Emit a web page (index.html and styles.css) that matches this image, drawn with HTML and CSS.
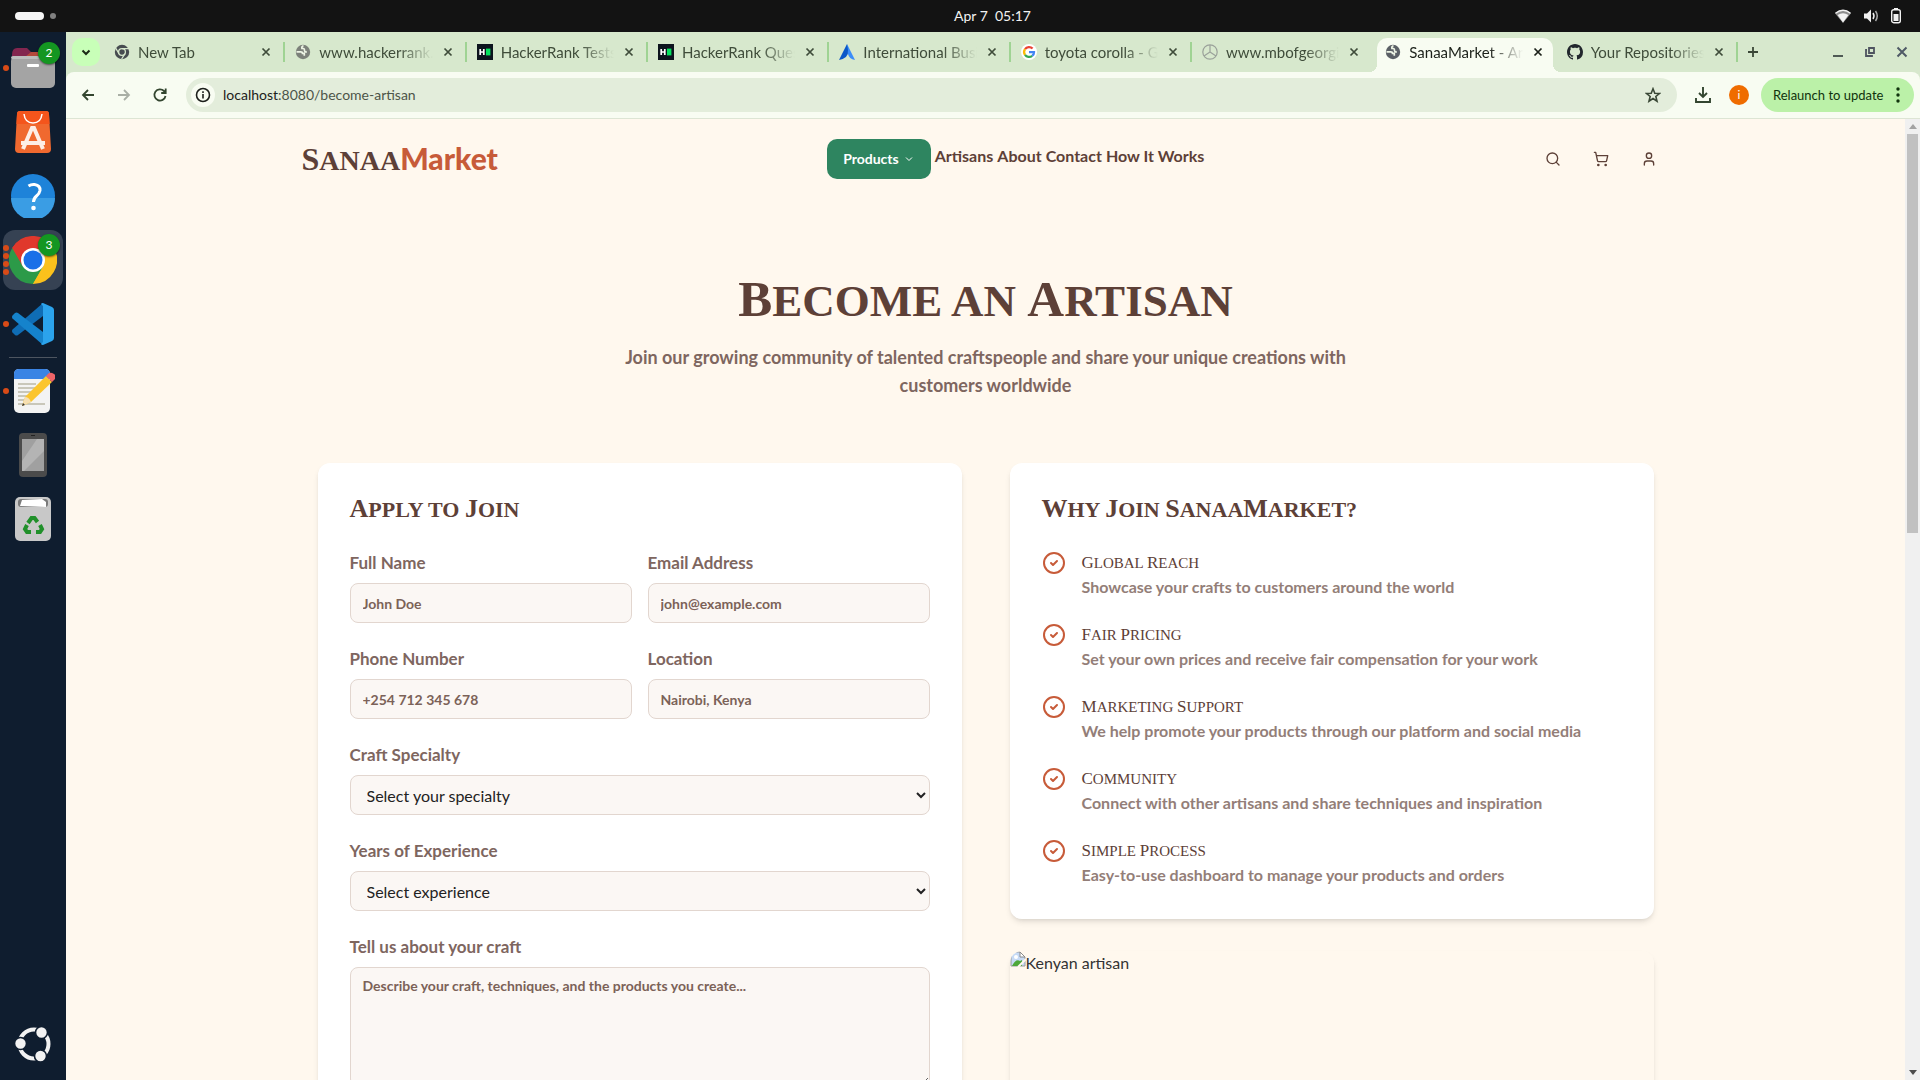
FILE: index.html
```
<!DOCTYPE html>
<html lang="en">
<head>
<meta charset="utf-8">
<title>SanaaMarket - Become an Artisan</title>
<link rel="stylesheet" href="styles.css">
</head>
<body>
<svg class="defs" aria-hidden="true">
  <symbol id="x" viewBox="0 0 16 16"><path d="M4 4l8 8M12 4l-8 8" stroke="currentColor" stroke-width="2" fill="none"/></symbol>
  <symbol id="globe" viewBox="0 0 16 16"><circle cx="8" cy="8" r="7.2" fill="currentColor"/><path d="M1.500 7.800h4.200q1.800 0 1.800 1.600h1.800v2.400M8.500 1.800q-2 .6-1.600 2.600 2.600-.4 2.600 1.800t2.300 1.400" fill="none" stroke="#edf4e5" stroke-width="1.700"/></symbol>
  <symbol id="hr" viewBox="0 0 16 16"><path d="M0 0h16v16H0z" fill="#0d141e"/><path d="M3.2 5v6M6.8 5v6M3 8h4" stroke="#fff" stroke-width="1.7"/><path d="M9 4.6h4.4v6.8H9z" fill="#05e15e"/></symbol>
  <symbol id="check" viewBox="0 0 24 24"><g fill="none" stroke="currentColor" stroke-width="2" stroke-linecap="round" stroke-linejoin="round"><circle cx="12" cy="12" r="10"/><path d="M9 12l2 2 4-4"/></g></symbol>
</svg>

<header class="topbar">
  <div class="workspaces"><i class="pill"></i><i class="spot"></i></div>
  <time class="clock">Apr 7&nbsp; 05:17</time>
  <div class="status">
    <svg width="18" height="16" viewBox="0 0 18 16"><path d="M1 5.2Q9-1 17 5.2L9 15z" fill="#8d8d8d"/><path d="M1.5 5.2Q9-.6 16.500 5.2" fill="none" stroke="#f2f2f2" stroke-width="1.4"/><path d="M3.600 7Q9 3.600 14.400 7L9 14.500z" fill="#f2f2f2"/></svg>
    <svg width="16" height="16" viewBox="0 0 16 16"><path d="M1 5.500h3L8 1.500v13L4 10.500H1z" fill="#f2f2f2"/><path d="M10 5q2 3 0 6" fill="none" stroke="#f2f2f2" stroke-width="1.500"/><path d="M12.500 3q3.500 5 0 10" fill="none" stroke="#aaa" stroke-width="1.500"/></svg>
    <svg width="12" height="16" viewBox="0 0 12 16"><path d="M4 0h4v2H4z" fill="#f2f2f2"/><rect x="1.700" y="1.700" width="8.600" height="13" rx="2" fill="none" stroke="#f2f2f2" stroke-width="1.400"/><path d="M3.500 6h5v7h-5z" fill="#f2f2f2"/></svg>
  </div>
</header>

<div class="desktop">
  <nav class="dock" aria-label="Dock">
    <div class="tile">
      <svg width="44" height="42" viewBox="0 0 44 42"><path d="M1 8q0-7 5-7h10l4 4h18q5 0 5 5v12H1z" fill="#83264f"/><path d="M20 5h18q5 0 5 5H14z" fill="#b5493c"/><rect x="0" y="9" width="44" height="32" rx="5" fill="#a4a4a4"/><rect x="0" y="9" width="44" height="3" rx="2" fill="#bdbdbd"/><rect x="16" y="17" width="12" height="3" rx="1" fill="#fff"/></svg>
      <span class="badge">2</span><span class="dots"><i></i></span>
    </div>
    <div class="tile">
      <svg width="36" height="42" viewBox="0 0 36 42"><path d="M5 0h26q3 0 3 3l2 35q0 4-4 4H4q-4 0-4-4L2 3q0-3 3-3z" fill="#f0692f"/><path d="M5 0h26q3 0 3 3l.6 10H1.400L2 3q0-3 3-3z" fill="#f4551c"/><path d="M9 3q1 9 9 9t9-9" fill="none" stroke="#fff" stroke-width="1.500"/><path d="M8 38l9-21h2l9 21M6 32h24" fill="none" stroke="#fdeee6" stroke-width="4"/></svg>
    </div>
    <div class="tile">
      <svg width="44" height="44" viewBox="0 0 44 44"><circle cx="22" cy="22" r="22" fill="#1e83d9"/><path d="M0 24h44a22 22 0 0 1-44 0z" fill="#3a9de4"/><path d="M17.500 12q3-2 6-1.500 6 1 5.500 6-.5 3-3.500 5.500-3 2.500-3 6" fill="none" stroke="#fff" stroke-width="3"/><circle cx="22.500" cy="34" r="2.300" fill="#fff"/></svg>
    </div>
    <div class="tile tile-active">
      <svg width="48" height="48" viewBox="0 0 48 48"><path d="M24 24L3.200 12A24 24 0 0 1 44.800 12z" fill="#e0382c"/><path d="M24 24L44.800 12A24 24 0 0 1 24 48z" fill="#fbc11c"/><path d="M24 24v0L3.200 12A24 24 0 0 0 24 48l10.400-18z" fill="#2c9a48"/><path d="M24 13h20.500q4 9 1.500 17L24 48l10.500-18z" fill="#fbc11c"/><path d="M3.200 12A24 24 0 0 1 44.800 13H24l-10.400 17z" fill="#e0382c"/><circle cx="24" cy="24" r="12" fill="#fff"/><circle cx="24" cy="24" r="9.500" fill="#1a6fe8"/></svg>
      <span class="badge">3</span><span class="dots"><i></i><i></i><i></i><i></i></span>
    </div>
    <div class="tile">
      <svg width="42" height="42" viewBox="0 0 42 42"><path d="M31 0v13L6 32q-1.500 1-3 0l-2.500-2.500q-1-1.500 0-3z" fill="#0f6db5"/><path d="M31 42V29L6 10q-1.500-1-3 0L.5 12.500q-1 1.500 0 3z" fill="#1583cc"/><path d="M31 0l9 4q2 1 2 3v28q0 2-2 3l-9 4q-1.500 0-2-1l2-2V3l-2-2q.5-1 2-1z" fill="#2ba3ec"/></svg>
      <span class="dots"><i></i></span>
    </div>
    <hr class="dock-rule">
    <div class="tile">
      <svg width="44" height="46" viewBox="0 0 44 46"><rect x="3" y="1" width="36" height="44" rx="5" fill="#f3f3f3"/><path d="M3 11V6q0-5 5-5h26q5 0 5 5v5z" fill="#3a84e4"/><path d="M7 16h18M7 20h18M7 24h15M7 28h12M7 32h10M7 36h27" stroke="#bcb9a8" stroke-width="1.600"/><path d="M11 38l3-9L35 8l6 6-21 20z" fill="#fbc52d"/><path d="M11 38l3-9q4 0 6 5z" fill="#f6dfb2"/><path d="M11 38l1-3 2 2z" fill="#333"/><path d="M35 8l3-3q2-1 5 1t1 5l-3 3z" fill="#ef6468"/></svg>
      <span class="dots"><i></i></span>
    </div>
    <div class="tile">
      <svg width="28" height="44" viewBox="0 0 28 44"><rect width="28" height="44" rx="4" fill="#4b4b4b"/><path d="M3 6h22v32H3z" fill="#a0a0a0"/><path d="M18 6h7v12L5 38H3V28z" fill="#b4b4b4"/><path d="M12 2.500h4" stroke="#222"/></svg>
    </div>
    <div class="tile">
      <svg width="38" height="46" viewBox="0 0 38 46"><rect x="1" y="1" width="36" height="44" rx="5" fill="#c8c8c8"/><rect x="4" y="3" width="30" height="8" rx="3" fill="#7a7a7a"/><path d="M6 10l2-6 20-1 4 3v5z" fill="#fff"/><g fill="none" stroke="#20902a" stroke-width="4"><path d="M14 27l3.500-5h3l3 4"/><path d="M26 29l2 4-2 3h-4"/><path d="M17 36h-4l-2-3 2-4"/></g></svg>
    </div>
    <button class="tile tile-last" aria-label="Show applications">
      <svg width="36" height="36" viewBox="0 0 36 36"><circle cx="19" cy="18" r="14.500" fill="none" stroke="#f2f2f2" stroke-width="4"/><g fill="#f2f2f2" stroke="#0f1d2f" stroke-width="1.600"><circle cx="5.500" cy="17.500" r="6"/><circle cx="26.500" cy="6.500" r="6"/><circle cx="25.500" cy="30" r="6"/></g></svg>
    </button>
  </nav>

  <div class="browser">
    <div class="tabstrip">
      <button class="tab-search" aria-label="Search tabs"><svg width="12" height="12" viewBox="0 0 12 12"><path d="M2.500 4.500L6 8l3.500-3.500" fill="none" stroke="#1b2a16" stroke-width="2"/></svg></button>
      <div class="tabs">
        <div class="tab"><svg class="fav" viewBox="0 0 16 16"><circle cx="8" cy="8" r="7.200" fill="#474c50"/><circle cx="8" cy="8" r="3.400" fill="none" stroke="#d7e8cd" stroke-width="1.300"/><path d="M8 4.600h7M5 9.700L1.600 4M11 9.700L7.600 15" stroke="#d7e8cd" stroke-width="1.300"/></svg><span>New Tab</span><button aria-label="Close"><svg><use href="#x"/></svg></button></div>
        <div class="tab"><svg class="fav grey"><use href="#globe"/></svg><span>www.hackerrank.com</span><button aria-label="Close"><svg><use href="#x"/></svg></button></div>
        <div class="tab"><svg class="fav"><use href="#hr"/></svg><span>HackerRank Tests</span><button aria-label="Close"><svg><use href="#x"/></svg></button></div>
        <div class="tab"><svg class="fav"><use href="#hr"/></svg><span>HackerRank Question</span><button aria-label="Close"><svg><use href="#x"/></svg></button></div>
        <div class="tab"><svg class="fav" viewBox="0 0 16 16"><path d="M8 0l8 16q-6-1-7-6L8 5z" fill="#3b8df8"/><path d="M8 0l1 6q1 8-9 10z" fill="#0a57c8"/></svg><span>International Business</span><button aria-label="Close"><svg><use href="#x"/></svg></button></div>
        <div class="tab"><svg class="fav" viewBox="0 0 16 16"><circle cx="8" cy="8" r="8" fill="#fff"/><g fill="none" stroke-width="2.300"><path d="M4 5.200A5 5 0 0 1 11.600 4.500" stroke="#ea4335"/><path d="M4 5.200a5 5 0 0 0 0 5.600" stroke="#fbbc05"/><path d="M4 10.800a5 5 0 0 0 7.200 1" stroke="#34a853"/><path d="M8 8.200h5q0 2.500-1.800 3.600" stroke="#4285f4"/></g></svg><span>toyota corolla - Google</span><button aria-label="Close"><svg><use href="#x"/></svg></button></div>
        <div class="tab before-active"><svg class="fav" viewBox="0 0 16 16"><g fill="none" stroke="#9aa19a" stroke-width="1.200"><circle cx="8" cy="8" r="7.200"/><path d="M8 1v7l-6 4M8 8l6 4"/></g></svg><span>www.mbofgeorgia.com</span><button aria-label="Close"><svg><use href="#x"/></svg></button></div>
        <div class="tab active"><svg class="fav dark"><use href="#globe"/></svg><span>SanaaMarket - Artisan</span><button aria-label="Close"><svg><use href="#x"/></svg></button></div>
        <div class="tab"><svg class="fav" viewBox="0 0 16 16"><path fill="#22272d" d="M8 0C3.580 0 0 3.580 0 8c0 3.540 2.290 6.530 5.470 7.590.4.070.55-.17.55-.38 0-.19-.01-.82-.01-1.490-2.010.37-2.530-.49-2.690-.94-.09-.23-.48-.94-.82-1.130-.28-.15-.68-.52-.01-.53.63-.01 1.080.58 1.230.82.72 1.210 1.870.87 2.330.66.07-.52.28-.87.51-1.070-1.780-.2-3.640-.89-3.640-3.950 0-.87.31-1.590.82-2.150-.08-.2-.36-1.020.08-2.120 0 0 .67-.21 2.200.82.64-.18 1.320-.27 2-.27s1.360.09 2 .27c1.530-1.040 2.200-.82 2.200-.82.44 1.100.16 1.920.08 2.120.51.56.82 1.270.82 2.150 0 3.070-1.870 3.750-3.650 3.950.29.25.54.73.54 1.480 0 1.070-.01 1.930-.01 2.200 0 .21.15.46.55.38A8.010 8.010 0 0 0 16 8c0-4.420-3.580-8-8-8z"/></svg><span>Your Repositories</span><button aria-label="Close"><svg><use href="#x"/></svg></button></div>
      </div>
      <div class="window-tools">
        <button aria-label="New tab"><svg width="12" height="12" viewBox="0 0 12 12"><path d="M6 1v10M1 6h10" stroke="#3b4737" stroke-width="1.800"/></svg></button>
        <button class="push" aria-label="Minimize"><svg width="12" height="12" viewBox="0 0 12 12"><path d="M1 10h10" stroke="#4f5a55" stroke-width="2"/></svg></button>
        <button aria-label="Restore"><svg width="12" height="12" viewBox="0 0 12 12"><path d="M5 2h5v5H5zM3 4H2v6h6V9" fill="none" stroke="#4f5460" stroke-width="1.800"/></svg></button>
        <button aria-label="Close window"><svg width="12" height="12" viewBox="0 0 12 12"><path d="M1.500 1.500l9 9M10.500 1.500l-9 9" stroke="#4f5a66" stroke-width="2"/></svg></button>
      </div>
    </div>

    <div class="toolbar">
      <button class="tool" aria-label="Back"><svg width="16" height="16" viewBox="0 0 16 16"><path d="M14 8H3M8 3L3 8l5 5" fill="none" stroke="#33452f" stroke-width="1.800"/></svg></button>
      <button class="tool" aria-label="Forward"><svg width="16" height="16" viewBox="0 0 16 16"><path d="M2 8h11M8 3l5 5-5 5" fill="none" stroke="#a9afa5" stroke-width="1.800"/></svg></button>
      <button class="tool" aria-label="Reload"><svg width="16" height="16" viewBox="0 0 16 16"><path d="M13.500 9A5.600 5.600 0 1 1 12 4l1.500 1.500M13.700 1.500V6H9.200" fill="none" stroke="#33452f" stroke-width="1.800"/></svg></button>
      <div class="omnibox">
        <span class="site-info"><svg width="16" height="16" viewBox="0 0 16 16"><circle cx="8" cy="8" r="6.500" fill="none" stroke="#1c1f1b" stroke-width="1.600"/><path d="M8 7v4.500M8 4.300v1.600" stroke="#1c1f1b" stroke-width="1.600"/></svg></span>
        <span class="url">localhost<span>:8080/become-artisan</span></span>
        <button class="tool" aria-label="Bookmark"><svg width="16" height="16" viewBox="0 0 18 18"><path d="M9 2l2 5 5.200.3-4 3.400 1.300 5.300L9 13l-4.500 3 1.300-5.300-4-3.400L7 7z" fill="none" stroke="#3a4836" stroke-width="1.800"/></svg></button>
      </div>
      <button class="tool download" aria-label="Downloads"><svg width="16" height="16" viewBox="0 0 16 16"><path d="M8 0v10M4 6l4 4 4-4M1 11v4h14v-4" fill="none" stroke="#33452f" stroke-width="1.900"/></svg></button>
      <span class="avatar">i</span>
      <button class="relaunch">Relaunch to update<svg width="4" height="16" viewBox="0 0 4 16"><g fill="#10330d"><circle cx="2" cy="2" r="1.700"/><circle cx="2" cy="8" r="1.700"/><circle cx="2" cy="14" r="1.700"/></g></svg></button>
    </div>

    <div class="viewport">
      <div class="page">
        <header class="site-header">
          <a class="logo" href="#"><b class="caps"><span>S</span>anaa</b>Market</a>
          <nav class="site-nav">
            <button class="products">Products<svg width="12" height="12" viewBox="0 0 24 24"><path d="M6 9l6 6 6-6" fill="none" stroke="#fff" stroke-width="2"/></svg></button>
            <a href="#">Artisans</a> <a href="#">About</a> <a href="#">Contact</a> <a href="#">How It Works</a>
          </nav>
          <div class="actions">
            <button aria-label="Search"><svg width="16" height="16" viewBox="0 0 24 24"><circle cx="11" cy="11" r="8"/><path d="M21 21l-4.300-4.300"/></svg></button>
            <button aria-label="Cart"><svg width="16" height="16" viewBox="0 0 24 24"><circle cx="8" cy="21" r="1"/><circle cx="19" cy="21" r="1"/><path d="M2.050 2.050h2l2.660 12.420a2 2 0 0 0 2 1.580h9.780a2 2 0 0 0 1.950-1.570l1.650-7.430H5.120"/></svg></button>
            <button aria-label="Account"><svg width="16" height="16" viewBox="0 0 24 24"><path d="M19 21v-2a4 4 0 0 0-4-4H9a4 4 0 0 0-4 4v2"/><circle cx="12" cy="7" r="4"/></svg></button>
          </div>
        </header>

        <main>
          <section class="hero">
            <h1 class="caps"><span>B</span>ecome an <span>A</span>rtisan</h1>
            <p>Join our growing community of talented craftspeople and share your unique creations with customers worldwide</p>
          </section>

          <div class="columns">
            <form class="card">
              <h2 class="caps"><span>A</span>pply to <span>J</span>oin</h2>
              <div class="fields">
                <div class="field"><label for="name">Full Name</label><input id="name" type="text" placeholder="John Doe"></div>
                <div class="field"><label for="email">Email Address</label><input id="email" type="email" placeholder="john@example.com"></div>
                <div class="field"><label for="phone">Phone Number</label><input id="phone" type="tel" placeholder="+254 712 345 678"></div>
                <div class="field"><label for="place">Location</label><input id="place" type="text" placeholder="Nairobi, Kenya"></div>
                <div class="field wide"><label for="craft">Craft Specialty</label><select id="craft"><option>Select your specialty</option></select></div>
                <div class="field wide"><label for="years">Years of Experience</label><select id="years"><option>Select experience</option></select></div>
                <div class="field wide"><label for="about">Tell us about your craft</label><textarea id="about" placeholder="Describe your craft, techniques, and the products you create..."></textarea></div>
              </div>
            </form>

            <div class="side">
              <section class="card">
                <h2 class="caps"><span>W</span>hy <span>J</span>oin <span>S</span>anaa<span>M</span>arket?</h2>
                <ul class="benefits">
                  <li><svg><use href="#check"/></svg><div><h3 class="caps"><span>G</span>lobal <span>R</span>each</h3><p>Showcase your crafts to customers around the world</p></div></li>
                  <li><svg><use href="#check"/></svg><div><h3 class="caps"><span>F</span>air <span>P</span>ricing</h3><p>Set your own prices and receive fair compensation for your work</p></div></li>
                  <li><svg><use href="#check"/></svg><div><h3 class="caps"><span>M</span>arketing <span>S</span>upport</h3><p>We help promote your products through our platform and social media</p></div></li>
                  <li><svg><use href="#check"/></svg><div><h3 class="caps"><span>C</span>ommunity</h3><p>Connect with other artisans and share techniques and inspiration</p></div></li>
                  <li><svg><use href="#check"/></svg><div><h3 class="caps"><span>S</span>imple <span>P</span>rocess</h3><p>Easy-to-use dashboard to manage your products and orders</p></div></li>
                </ul>
              </section>
              <div class="photo"><svg width="16" height="16" viewBox="0 0 16 16"><path d="M1 1h9l5 5v9H1z" fill="#c6daf5" stroke="#9a9a9a"/><path d="M10 1v5h5z" fill="#fff" stroke="#8a8a8a"/><path d="M2 15q4-8 8-5l2-1v6z" fill="#4ea83a"/><circle cx="6" cy="6" r="2" fill="#fff"/><path d="M8 16l8-8" stroke="#fff8ee" stroke-width="2"/></svg><span>Kenyan artisan</span></div>
            </div>
          </div>
        </main>
      </div>
      <div class="scrollbar"><i class="up"></i><i class="thumb"></i><i class="down"></i></div>
    </div>
  </div>
</div>
</body>
</html>
```
FILE: styles.css
```
:root {
  --brown: #5d4037;
  --rust: #c75b39;
  --cream: #fff8ee;
  --ui: Lato, "Noto Sans", sans-serif;
  --display: "Liberation Serif", serif;
}

* { box-sizing: border-box; margin: 0; }

body {
  display: flex;
  flex-direction: column;
  height: 100vh;
  overflow: hidden;
  font: 16px/24px var(--ui);
  color: #333;
}

button { padding: 0; border: 0; background: none; font: inherit; color: inherit; }
a { color: inherit; text-decoration: none; }
svg { display: block; flex: none; }
.defs { position: absolute; width: 0; height: 0; }

/* System bar */
.topbar {
  display: grid;
  grid-template-columns: 1fr auto 1fr;
  align-items: center;
  flex: none;
  height: 32px;
  padding: 0 18px 0 15px;
  background: #131313;
  color: #f2f2f2;
}
.workspaces { display: flex; align-items: center; gap: 6px; }
.pill { width: 29px; height: 8px; border-radius: 4px; background: #f6f6f6; }
.spot { width: 6px; height: 6px; border-radius: 50%; background: #808080; }
/* centred over the area right of the dock */
.clock { padding-left: 68px; font-size: 14px; }
.status { display: flex; justify-content: flex-end; align-items: center; gap: 11px; }

.desktop { display: flex; flex: 1; min-height: 0; }

/* Dock */
.dock {
  display: flex;
  flex-direction: column;
  align-items: center;
  gap: 4px;
  flex: none;
  width: 66px;
  padding: 6px 0;
  background: #0f1d2f;
}
.tile {
  position: relative;
  display: flex;
  align-items: center;
  justify-content: center;
  flex: none;
  width: 60px;
  height: 60px;
  border-radius: 12px;
}
.tile-active { background: #364253; }
.tile-last { margin-top: auto; }
.badge {
  position: absolute;
  top: 4px;
  right: 3px;
  width: 22px;
  height: 22px;
  border-radius: 50%;
  background: #149621;
  box-shadow: 0 1px 2px #0008;
  color: #fff;
  font-size: 12px;
  line-height: 22px;
  text-align: center;
}
.dots {
  position: absolute;
  left: 0;
  top: 0;
  bottom: 0;
  display: flex;
  flex-direction: column;
  justify-content: center;
  gap: 2px;
}
.dots i { width: 6px; height: 6px; border-radius: 50%; background: #d94b17; }
.dock-rule { width: 48px; height: 1px; margin: -1px 0; border: 0; background: #4d5560; }

/* Browser frame */
.browser { display: flex; flex-direction: column; flex: 1; min-width: 0; background: #d7e8cd; }
.tabstrip { display: flex; align-items: center; flex: none; height: 40px; padding-left: 6px; }
.tab-search {
  display: grid;
  place-items: center;
  width: 28px;
  height: 28px;
  margin-right: 4px;
  border-radius: 10px;
  background: #c8ffb8;
}
.tabs { display: flex; flex: 1; min-width: 0; align-self: stretch; padding-top: 6px; }
.tab {
  position: relative;
  display: flex;
  align-items: center;
  flex: 1;
  min-width: 0;
  padding: 0 12px 6px 10px;
  color: #3f4c3a;
  font-size: 15px;
  line-height: 20px;
}
.tab::after {
  content: "";
  position: absolute;
  right: 0;
  width: 2px;
  height: 20px;
  background: #9fd393;
}
.tab > span {
  flex: 1;
  margin-left: 8px;
  overflow: hidden;
  white-space: nowrap;
  -webkit-mask-image: linear-gradient(to right, #000 70%, transparent);
  mask-image: linear-gradient(to right, #000 70%, transparent);
}
.tab button { margin-left: 8px; }
.tab button svg { width: 14px; height: 14px; }
.fav { width: 16px; height: 16px; }
.grey { color: #7c817a; }
.dark { color: #5b6066; }
.before-active::after { display: none; }
.active {
  margin: 0 4px;
  padding: 0 8px 6px;
  border-radius: 10px 10px 0 0;
  background: #f8fcf2;
  color: #1c211a;
}
/* flared feet of the selected tab */
.active::before, .active::after {
  content: "";
  position: absolute;
  bottom: 0;
  width: 8px;
  height: 8px;
}
.active::before { left: -8px; background: radial-gradient(circle at 0 0, transparent 8px, #f8fcf2 8px); }
.active::after { right: -8px; background: radial-gradient(circle at 100% 0, transparent 8px, #f8fcf2 8px); }
.window-tools { display: flex; align-items: center; flex: none; width: 182px; padding: 0 12px 0 9px; gap: 20px; }
.push { margin-left: auto; }

.toolbar {
  display: flex;
  align-items: center;
  flex: none;
  height: 47px;
  padding: 0 6px 1px 10px;
  border-radius: 8px 8px 0 0;
  border-bottom: 1px solid #dde5d4;
  background: #f8fcf2;
}
.tool { display: grid; place-items: center; width: 24px; height: 24px; margin-right: 12px; }
.omnibox {
  display: flex;
  align-items: center;
  flex: 1;
  height: 34px;
  margin-left: 2px;
  padding-left: 5px;
  border-radius: 17px;
  background: #e3eddb;
}
.site-info { display: grid; place-items: center; width: 24px; height: 24px; border-radius: 50%; background: #f8fcf2; }
.url { flex: 1; margin-left: 8px; font-size: 14px; color: #1c211a; }
.url span { color: #4d5549; }
.download { margin: 0 14px; }
.avatar {
  width: 20px;
  height: 20px;
  margin-right: 12px;
  border-radius: 50%;
  background: #ef6c00;
  color: #fff;
  font-size: 12px;
  line-height: 20px;
  text-align: center;
}
.relaunch {
  display: flex;
  align-items: center;
  justify-content: space-between;
  width: 153px;
  height: 34px;
  padding: 0 14px 0 12px;
  border-radius: 17px;
  background: #bbf1a8;
  color: #10330d;
  font-size: 13px;
}

/* Page */
.viewport { display: flex; flex: 1; min-height: 0; background: var(--cream); }
.page { flex: 1; min-width: 0; overflow: hidden; }
.scrollbar { display: flex; flex-direction: column; align-items: center; flex: none; width: 15px; padding: 5px 0; background: #f0f0f0; }
.up, .down { border: 4px solid transparent; }
.up { border-top: 0; border-bottom-color: #a3a3a3; border-bottom-width: 5px; }
.down { margin-top: auto; border-bottom: 0; border-top-color: #4d4d4d; border-top-width: 5px; }
.thumb { width: 11px; height: 42%; margin-top: 5px; background: #c1c1c1; }

/* Small capitals with slightly taller initials */
.caps { font-family: var(--display); font-weight: 700; text-transform: uppercase; color: var(--brown); }
.caps span { line-height: 0; }

.site-header {
  display: flex;
  align-items: center;
  justify-content: space-between;
  max-width: 1400px;
  height: 80px;
  margin: 0 auto;
  padding: 0 16px;
  color: var(--brown);
}
.logo { color: var(--rust); font-size: 30px; font-weight: 900; line-height: 40px; }
.logo .caps { font-size: 28px; }
.logo .caps span { font-size: 32px; }
.site-nav { display: flex; align-items: center; gap: 4px; font-weight: 700; }
.site-nav a { padding-bottom: 6px; }
.products {
  display: flex;
  align-items: center;
  gap: 4px;
  height: 40px;
  padding: 0 16px;
  border-radius: 10px;
  background: #2e8560;
  color: #fff;
  font-size: 14px;
}
.actions { display: flex; gap: 8px; }
.actions button { display: grid; place-items: center; width: 40px; height: 40px; }
.actions svg { fill: none; stroke: var(--brown); stroke-width: 2; stroke-linecap: round; stroke-linejoin: round; }

main { max-width: 1400px; margin: 0 auto; padding: 72px 32px; }
.hero { max-width: 768px; margin: 0 auto 64px; text-align: center; }
.hero h1 { margin-bottom: 12px; font-size: 45px; line-height: 60px; }
.hero h1 span { font-size: 51px; }
.hero p { color: #7e665f; font-size: 18px; font-weight: 700; line-height: 28px; }

.columns { display: grid; grid-template-columns: 1fr 1fr; gap: 48px; }
.card {
  padding: 32px;
  border-radius: 12px;
  background: #fff;
  box-shadow: 0 4px 6px -1px #0000001a, 0 2px 4px -2px #0000001a;
}
.card h2 { margin-bottom: 26px; font-size: 22px; line-height: 30px; }
.card h2 span { font-size: 26px; }

.fields { display: grid; grid-template-columns: 1fr 1fr; gap: 24px 16px; }
.field { display: flex; flex-direction: column; gap: 8px; }
.wide { grid-column: 1 / -1; }
.field label { color: #7e665f; font-size: 17px; font-weight: 700; }
.field input, .field select, .field textarea {
  width: 100%;
  height: 40px;
  padding: 0 12px;
  border: 1px solid #e2d6cf;
  border-radius: 8px;
  background-color: #fbf7f4;
  color: #222;
  font: 700 14px/20px var(--ui);
}
.field select { padding-right: 0; font-size: 16px; font-weight: 400; }
.field textarea { display: block; height: 120px; padding: 8px 12px; }
.field ::placeholder { color: #7b6258; opacity: 1; }

.side { display: flex; flex-direction: column; gap: 32px; }
.benefits { display: grid; gap: 24px; padding: 0; list-style: none; }
.benefits li { display: flex; gap: 16px; }
.benefits svg { width: 24px; height: 24px; color: var(--rust); }
.benefits h3 { font-size: 15px; font-weight: 400; line-height: 24px; }
.benefits h3 span { font-size: 17px; }
.benefits p { color: #937e78; font-weight: 700; }
.photo {
  display: flex;
  height: 400px;
  border-radius: 12px;
  overflow: hidden;
  box-shadow: 0 4px 6px -1px #0000001a, 0 2px 4px -2px #0000001a;
}
```
